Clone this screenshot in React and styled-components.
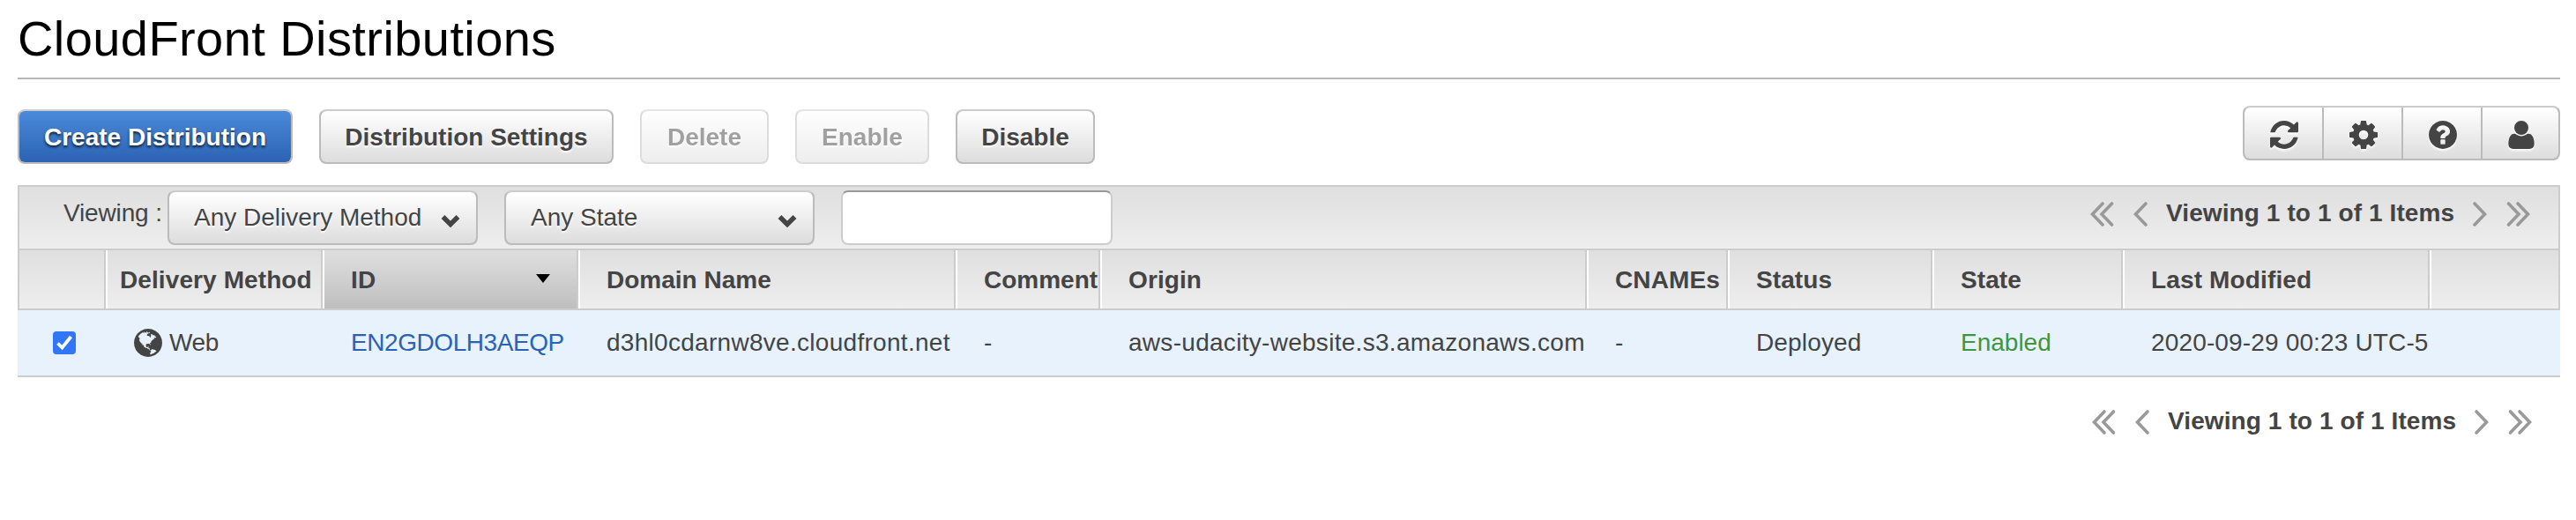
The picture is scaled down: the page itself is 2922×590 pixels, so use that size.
import React from "react";
import styled, { createGlobalStyle, css } from "styled-components";

const GlobalStyle = createGlobalStyle`
  *, *::before, *::after { box-sizing: border-box; }
  body {
    margin: 0;
    background: #fff;
    color: #444;
    font-family: "Liberation Sans", Arial, Helvetica, sans-serif;
    font-size: 28px;
    line-height: 32px;
  }
`;

const Page = styled.main`
  width: 2922px;
  height: 590px;
  padding: 0 18px 0 20px;
  overflow: hidden;
`;

const Title = styled.h1`
  margin: 0;
  height: 90px;
  padding-top: 12px;
  border-bottom: 2px solid #b7b7b7;
  color: #000;
  font-size: 56px;
  font-weight: 400;
  line-height: 64px;
  letter-spacing: 0.42px;
`;

const ActionBar = styled.div`
  display: flex;
  justify-content: space-between;
  align-items: flex-start;
  height: 120px;
  padding-top: 30px;
`;

const ButtonRow = styled.div`
  display: flex;
  gap: 30px;
  padding-top: 4px;
`;

const raised = css`
  border: 2px solid #bbb;
  border-top-color: #ccc;
  border-radius: 8px;
  background: linear-gradient(#fff, #ddd) padding-box, #bbb border-box;
  color: #444;
  text-shadow: 0 2px 2px #fff;
`;

const Button = styled.button`
  ${raised}
  width: ${(p) => p.$width}px;
  height: 62px;
  padding: 1px 0 0;
  font: bold 28px/32px "Liberation Sans", Arial, sans-serif;
  white-space: nowrap;
  ${(p) =>
    p.$primary &&
    css`
      background: linear-gradient(#4b89da, #2c63b4) padding-box, #bbb border-box;
      color: #fff;
      text-shadow: 0 2px 3px rgba(0, 0, 0, 0.75);
    `}
  &:disabled { opacity: 0.5; }
`;

const IconGroup = styled.div`
  ${raised}
  display: flex;
  width: 360px;
  height: 62px;
`;

const IconButton = styled.button`
  display: flex;
  align-items: center;
  justify-content: center;
  width: 90px;
  padding: 3px 0 0 2px;
  border: 0;
  border-right: 2px solid #bbb;
  background: none;
  color: #444;
  &:last-child { border-right: 0; width: 86px; }
  svg { filter: drop-shadow(0 2px 1px #fff); }
`;

const FilterBar = styled.div`
  display: flex;
  align-items: flex-start;
  height: 74px;
  padding: 4px 28px 0 50px;
  border: 2px solid #ccc;
  background: linear-gradient(#dfdfdf, #eee);
`;

const FilterLabel = styled.span`
  width: 118px;
  padding-top: 10px;
  letter-spacing: -0.15px;
`;

const Select = styled.button`
  ${raised}
  display: flex;
  justify-content: space-between;
  align-items: center;
  width: 352px;
  height: 62px;
  margin-right: 30px;
  padding: 0 18px 0 28px;
  font: 28px/32px "Liberation Sans", Arial, sans-serif;
  svg { margin-top: 6px; }
`;

const SearchInput = styled.input`
  width: 308px;
  height: 62px;
  border: 2px solid #ccc;
  border-top-color: #999;
  border-radius: 8px;
  background: #fff;
`;

const Pagination = styled.nav`
  display: flex;
  align-items: center;
  height: 32px;
  margin: ${(p) => p.$margin};
  color: #444;
  font-weight: bold;
  letter-spacing: 0.1px;
  white-space: nowrap;
`;

const PageText = styled.span`
  width: 328px;
  margin: 0 20px 0 21px;
`;

const PageArrow = styled.svg`
  display: block;
  margin: 2px ${(p) => p.$after || 0}px 0 0;
  overflow: visible;
  fill: none;
  stroke: #999;
  stroke-width: 3.6;
  stroke-linecap: round;
`;

const columns = "100px 246px 290px 428px 164px 552px 160px 232px 216px 348px 1fr";

const HeaderRow = styled.div`
  display: grid;
  grid-template-columns: ${columns};
  height: 68px;
  border-bottom: 2px solid #ccc;
`;

const HeaderCell = styled.div`
  display: flex;
  align-items: center;
  justify-content: space-between;
  min-width: 0;
  padding: 2px ${(p) => (p.$sorted ? 30 : 0)}px 0 ${(p) => (p.$tight ? 14 : 30)}px;
  border-right: 2px solid #ccc;
  border-left: 2px solid ${(p) => (p.$first ? "#ccc" : "#fff")};
  background: ${(p) =>
    p.$sorted ? "linear-gradient(#dfdfdf, #bfbfbf)" : "linear-gradient(#dfdfdf, #eee)"};
  font-weight: bold;
  letter-spacing: ${(p) => p.$track ?? 0.1}px;
  white-space: nowrap;
`;

const SortArrow = styled.svg`
  display: block;
  margin-bottom: 4px;
  fill: #000;
`;

const BodyRow = styled.div`
  display: grid;
  grid-template-columns: ${columns};
  height: 76px;
  border-bottom: 2px solid #ccc;
  background: #e8f2fd;
`;

const tones = { link: "#2a63b3", ok: "#3f963f" };

const Cell = styled.div`
  display: flex;
  align-items: center;
  gap: 8px;
  padding: 0 0 0 ${(p) => p.$indent || 32}px;
  color: ${(p) => tones[p.$tone] || "#444"};
  letter-spacing: ${(p) => p.$track || 0}px;
  white-space: nowrap;
`;

const Checkbox = styled.span`
  display: flex;
  width: 26px;
  height: 26px;
  border-radius: 4px;
  background: #3076f6;
`;

const Footer = styled.footer`
  display: flex;
  justify-content: flex-end;
`;

const glyphs = {
  refresh:
    "M1639 1056q0 5-1 7-64 268-268 434.5t-478 166.5q-146 0-282.5-55t-243.5-157l-129 129q-19 19-45 19t-45-19-19-45v-448q0-26 19-45t45-19h448q26 0 45 19t19 45-19 45l-137 137q71 66 161 102t187 36q134 0 250-65t186-179q11-17 53-117 8-23 30-23h192q13 0 22.5 9.5t9.5 22.5zm25-800v448q0 26-19 45t-45 19h-448q-26 0-45-19t-19-45 19-45l138-138q-148-137-349-137-134 0-250 65t-186 179q-11 17-53 117-8 23-30 23h-199q-13 0-22.5-9.5t-9.5-22.5v-7q65-268 270-434.5t480-166.5q146 0 284 55.5t245 156.5l130-129q19-19 45-19t45 19 19 45z",
  cog: "M1152 896q0-106-75-181t-181-75-181 75-75 181 75 181 181 75 181-75 75-181zm512-109v222q0 12-8 23t-20 13l-185 28q-19 54-39 91 35 50 107 138 10 12 10 25t-9 23q-27 37-99 108t-94 71q-12 0-26-9l-138-108q-44 23-91 38-16 136-29 186-7 28-36 28h-222q-14 0-24.5-8.5t-11.5-21.5l-28-184q-49-16-90-37l-141 107q-10 9-25 9-14 0-25-11-126-114-165-168-7-10-7-23 0-12 8-23 15-21 51-66.5t54-70.5q-27-50-41-99l-183-27q-13-2-21-12.5t-8-23.5v-222q0-12 8-23t19-13l186-28q14-46 39-92-40-57-107-138-10-12-10-24 0-10 9-23 26-36 98.5-107.5t94.5-71.5q13 0 26 10l138 107q44-23 91-38 16-136 29-186 7-28 36-28h222q14 0 24.5 8.5t11.5 21.5l28 184q49 16 90 37l142-107q9-9 24-9 13 0 25 10 129 119 165 170 7 8 7 22 0 12-8 23-15 21-51 66.5t-54 70.5q26 50 41 98l183 28q13 2 21 12.5t8 23.5z",
  help: "M1024 1376v-192q0-14-9-23t-23-9h-192q-14 0-23 9t-9 23v192q0 14 9 23t23 9h192q14 0 23-9t9-23zm256-672q0-88-55.5-163t-138.5-116-170-41q-243 0-371 213-15 24 8 42l132 100q7 6 19 6 16 0 25-12 53-68 86-92 34-24 86-24 48 0 85.5 26t37.5 59q0 38-20 61t-68 45q-63 28-115.5 86.5t-52.5 125.5v36q0 14 9 23t23 9h192q14 0 23-9t9-23q0-19 21.5-49.5t54.5-49.5q32-18 49-28.5t46-35 44.5-48 28-60.5 12.5-81zm384 192q0 209-103 385.5t-279.5 279.5-385.5 103-385.5-103-279.5-279.5-103-385.5 103-385.5 279.5-279.5 385.5-103 385.5 103 279.5 279.5 103 385.5z",
  user: "M1600 1405q0 120-73 189.5t-194 69.5h-874q-121 0-194-69.5t-73-189.5q0-53 3.500-103.500t14-109 26.500-108.500 43-97.500 62-81 85.500-53.500 111.500-20q9 0 42 21.500t74.500 48 108 48 133.500 21.500 133.500-21.500 108-48 74.500-48 42-21.500q61 0 111.500 20t85.500 53.500 62 81 43 97.500 26.500 108.500 14 109 3.500 103.500zm-320-893q0 159-112.500 271.500t-271.500 112.500-271.500-112.500-112.500-271.500 112.500-271.500 271.500-112.500 271.500 112.500 112.500 271.500z",
  globe:
    "M896 128q209 0 385.5 103t279.5 279.5 103 385.5-103 385.5-279.5 279.5-385.5 103-385.5-103-279.5-279.5-103-385.5 103-385.5 279.5-279.5 385.5-103zm274 521q-2 1-9.5 9.5t-13.5 9.5q2 0 4.5-5t5-11 3.5-7q6-7 22-15 14-6 52-12 34-8 51 11-2-2 9.5-13t14.5-12q3-2 15-4.5t15-7.5l2-22q-12 1-17.5-7t-6.5-21q0 2-6 8 0-7-4.5-8t-11.5 1-9 1q-10-3-15-7.5t-8-16.5-4-15q-2-5-9.5-11t-9.5-10q-1-2-2.5-5.5t-3-6.5-4-5.5-5.5-2.5-7 5-7.5 10-4.5 5q-3-2-6-1.5t-4.5 1-4.5 3-5 3.5q-3 2-8.5 3t-8.5 2q15-5-1-11-10-4-16-3 9-4 7.5-12t-8.5-14h5q-1-4-8.5-8.5t-17.5-8.5-13-6q-8-5-34-9.5t-33-.5q-5 6-4.5 10.5t4 14 3.500 12.500q1 6-5.500 13t-6.500 12q0 7 14 15.500t10 21.500q-3 8-16 16t-16 12q-5 8-1.500 18.500t10.500 16.500q2 2 1.500 4t-3.500 4.500-5.500 4-6.500 3.500l-3 2q-11 5-20.500-6t-13.500-26q-7-25-16-30-23-8-29 1-5-13-41-26-25-9-58-4 6-1 0-15-7-15-19-12 3-6 4-17.500t1-13.500q3-13 12-23 1-1 7-8.500t9.500-13.500.5-6q35 4 50-11 5-5 11.500-17t10.500-17q9-6 14-5.500t14.500 5.500 14.500 5q14 1 15.500-11t-7.500-20q12 1 3-17-4-7-8-9-12-4-27 5-8 4 2 8-1-1-9.500 10.500t-16.500 17.500-16-5q-1-1-5.500-13.500t-9.500-13.500q-8 0-16 15 3-8-11-15t-24-8q19-12-8-27-7-4-20.500-5t-19.500 4q-5 7-5.500 11.500t5 8 10.500 5.500 11.500 4 8.500 3q14 10 8 14-2 1-8.500 3.500t-11.500 4.500-6 4q-3 4 0 14t-2 14q-5-5-9-17.500t-7-16.500q7 9-25 6l-10-1q-4 0-16 2t-20.500 1-13.500-8q-4-8 0-20 1-4 4-2-4-3-11-9.500t-10-8.500q-46 15-94 41 6 1 12-1 5-2 13-6.500t10-5.500q34-14 42-7l5-5q14 16 20 25-7-4-30-1-20 6-22 12 7 12 5 18-4-3-11.500-10t-14.500-11-15-5q-16 0-22 1-146 80-235 222 7 7 12 8 4 1 5 9t2.500 11 11.500-3q9 8 3 19 1-1 44 27 19 17 21 21 3 11-10 18-1-2-9-9t-9-4q-3 5 .5 18.500t10.500 12.500q-7 0-9.500 16t-2.500 35.500-1 23.500l2 1q-3 12 5.500 34.500t21.500 19.500q-13 3 20 43 6 8 8 9 3 2 12 7.500t15 10 10 10.500q4 5 10 22.500t14 23.500q-2 6 9.500 20t10.500 23q-1 0-2.500 1t-2.500 1q3 7 15.500 14t15.500 13q1 3 2 10t3 11 8 2q2-20-24-62-15-25-17-29-3-5-5.500-15.500t-4.500-14.500q2 0 6 1.500t8.500 3.500 7.500 4 2 3q-3 7 2 17.500t12 18.500 17 19 12 13q6 6 14 19.500t0 13.500q9 0 20 10t17 20q5 8 8 26t5 24q2 7 8.500 13.500t12.500 9.500l16 8 13 7q5 2 18.500 10.500t21.500 11.500q10 4 16 4t14.500-2.500 13.500-3.500q15-2 29 15t21 21q36 19 55 11-2 1 .5 7.500t8 15.500 9 14.500 5.500 8.500q5 6 18 15t18 15q6-4 7-9-3 8 7 20t18 10q14-3 14-32-31 15-49-18 0-1-2.500-5.500t-4-8.500-2.500-8.500 0-7.500 5-3q9 0 10-3.500t-2-12.500-4-13q-1-8-11-20t-12-15q-5 9-16 8t-16-9q0 1-1.500 5.500t-1.500 6.500q-13 0-15-1 1-3 2.500-17.500t3.500-22.500q1-4 5.500-12t7.500-14.500 4-12.500-4.500-9.500-17.500-2.500q-19 1-26 20-1 3-3 10.500t-5 11.500-9 7q-7 3-24 2t-24-5q-13-8-22.500-29t-9.500-37q0-10 2.500-26.500t3-25-5.500-24.500q3-2 9-9.500t10-10.500q2-1 4.500-1.500t4.500 0 4-1.500 3-6q-1-1-4-3-3-3-4-3 7 3 28.500-1.500t27.500 1.500q15 11 22-2 0-1-2.500-9.500t-.5-13.500q5 27 29 9 3 3 15.500 5t17.500 5q3 2 7 5.500t5.500 4.500 5-.5 8.500-6.500q10 14 12 24 11 40 19 44 7 3 11 2t4.500-9.500 0-14-1.500-12.500l-1-8v-18l-1-8q-15-3-18.500-12t1.500-18.500 15-18.500q1-1 8-3.500t15.500-6.500 12.500-8q21-19 15-35 7 0 11-9-1 0-5-3t-7.500-5-4.500-2q9-5 2-16 5-3 7.500-11t7.500-10q9 12 21 2 8-8 1-16 5-7 20.500-10.500t18.500-9.500q7 2 8-2t1-12 3-12q4-5 15-9t13-5l17-11q3-4 0-4 18 2 31-11 10-11-6-20 3-6-3-9.500t-15-5.500q3-1 11.500-.5t10.500-1.500q15-10-7-16-17-5-43 12zm-163 877q206-36 351-189-3-3-12.500-4.500t-12.500-3.500q-18-7-24-8 1-7-2.500-13t-8-9-12.500-8-11-7q-2-2-7-6t-7-5.500-7.500-4.500-8.500-2-10 1l-3 1q-3 1-5.500 2.500t-5.500 3-4 3 0 2.500q-21-17-36-22-5-1-11-5.500t-10.500-7-10-1.500-11.500 7q-5 5-6 15t-2 13q-7-5 0-17.500t2-18.500q-3-6-10.500-4.500t-12 4.500-11.500 8.500-9 6.500-8.500 5.500-8.500 7.500q-3 4-6 12t-5 11q-2-4-11.500-6.500t-9.500-5.500q2 10 4 35t5 38q7 31-12 48-27 25-29 40-4 22 12 26 0 7-8 20.500t-7 21.500q0 6 2 16z",
};

// Glyph art fills the 128..1664 square of a 1792 unit em.
const Glyph = ({ name }) => (
  <svg width="32" height="32" viewBox="128 128 1536 1536" fill="currentColor" overflow="visible">
    <path d={glyphs[name]} />
  </svg>
);

const SelectArrow = () => (
  <svg width="22" height="15" viewBox="0 0 22 15">
    <path d="M2.500 3l8.500 8.500L19.500 3" fill="none" stroke="#444" strokeWidth="5.400" />
  </svg>
);

const Pager = ({ margin }) => (
  <Pagination $margin={margin}>
    <PageArrow width="26" height="26" $after={23}>
      <path d="M14 1L2.500 13 14 25M24.500 1L13 13l11.500 12" />
    </PageArrow>
    <PageArrow width="16" height="26">
      <path d="M14 1L2.500 13 14 25" />
    </PageArrow>
    <PageText>Viewing 1 to 1 of 1 Items</PageText>
    <PageArrow width="16" height="26" $after={23}>
      <path d="M2 1l11.500 12L2 25" />
    </PageArrow>
    <PageArrow width="26" height="26">
      <path d="M1.500 1L13 13 1.500 25M12 1l11.500 12L12 25" />
    </PageArrow>
  </Pagination>
);

const Spacer = styled.div`
  flex: 1;
`;

export default function App() {
  return (
    <>
      <GlobalStyle />
      <Page>
        <Title>CloudFront Distributions</Title>
        <ActionBar>
          <ButtonRow>
            <Button $primary $width={312}>Create Distribution</Button>
            <Button $width={334}>Distribution Settings</Button>
            <Button $width={146} disabled>Delete</Button>
            <Button $width={152} disabled>Enable</Button>
            <Button $width={158}>Disable</Button>
          </ButtonRow>
          <IconGroup>
            {["refresh", "cog", "help", "user"].map((name) => (
              <IconButton key={name} aria-label={name}>
                <Glyph name={name} />
              </IconButton>
            ))}
          </IconGroup>
        </ActionBar>
        <FilterBar>
          <FilterLabel>Viewing :</FilterLabel>
          <Select>
            Any Delivery Method
            <SelectArrow />
          </Select>
          <Select>
            Any State
            <SelectArrow />
          </Select>
          <SearchInput />
          <Spacer />
          <Pager margin="10px 4px 0 0" />
        </FilterBar>
        <HeaderRow>
          <HeaderCell $first />
          <HeaderCell $tight>Delivery Method</HeaderCell>
          <HeaderCell $sorted>
            ID
            <SortArrow width="16" height="10" viewBox="0 0 16 10">
              <path d="M0 0h16L8 10z" />
            </SortArrow>
          </HeaderCell>
          <HeaderCell $track={0}>Domain Name</HeaderCell>
          <HeaderCell $track={0}>Comment</HeaderCell>
          <HeaderCell>Origin</HeaderCell>
          <HeaderCell>CNAMEs</HeaderCell>
          <HeaderCell>Status</HeaderCell>
          <HeaderCell>State</HeaderCell>
          <HeaderCell $track={0.14}>Last Modified</HeaderCell>
          <HeaderCell />
        </HeaderRow>
        <BodyRow>
          <Cell $indent={40}>
            <Checkbox>
              <svg width="26" height="26" viewBox="0 0 26 26">
                <path d="M5.500 13.500l5 5L20.500 6" fill="none" stroke="#fff" strokeWidth="3.800" />
              </svg>
            </Checkbox>
          </Cell>
          <Cell $track={-0.4}>
            <Glyph name="globe" />
            Web
          </Cell>
          <Cell $tone="link" $track={-0.43}>EN2GDOLH3AEQP</Cell>
          <Cell $track={0.29}>d3hl0cdarnw8ve.cloudfront.net</Cell>
          <Cell>-</Cell>
          <Cell $track={0.29}>aws-udacity-website.s3.amazonaws.com</Cell>
          <Cell>-</Cell>
          <Cell $track={0.15}>Deployed</Cell>
          <Cell $tone="ok">Enabled</Cell>
          <Cell $track={0.15}>2020-09-29 00:23 UTC-5</Cell>
        </BodyRow>
        <Footer>
          <Pager margin="34px 32px 0 0" />
        </Footer>
      </Page>
    </>
  );
}
